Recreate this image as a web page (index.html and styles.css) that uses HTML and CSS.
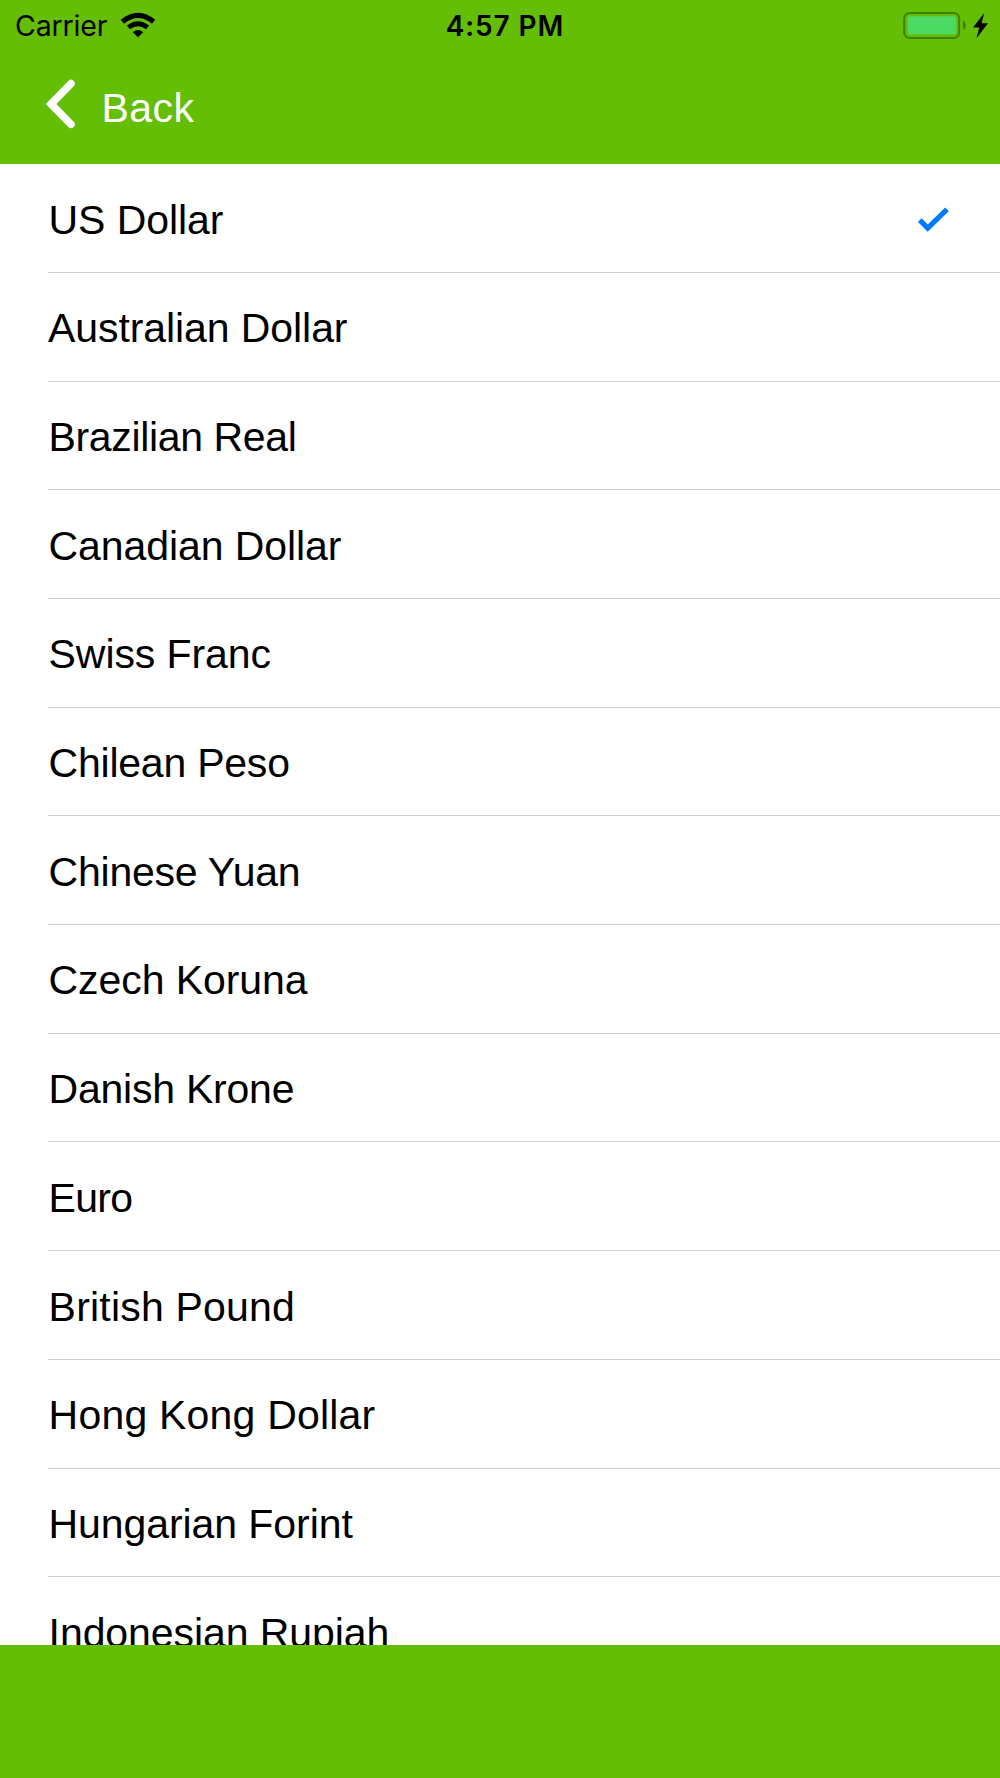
FILE: index.html
```html
<!DOCTYPE html>
<html lang="en">
<head>
<meta charset="utf-8">
<title>Currency</title>
<link rel="stylesheet" href="styles.css">
</head>
<body>
<div class="screen">
  <header class="header">
    <div class="status">
      <div class="status-left">
        <span class="carrier">Carrier</span>
        <svg class="wifi" width="36" height="26" viewBox="120 11 36 26" fill="none" stroke="#000">
          <path d="M122.4 20.8Q138 8 153.6 20.8" stroke-width="5"/>
          <path d="M128.4 26.4Q138 19 147.6 26.4" stroke-width="4.8"/>
          <path d="M132.8 31.2Q138 27 143.2 31.2L138 36.3Z" fill="#000" stroke="none"/>
        </svg>
      </div>
      <span class="time">4:57 PM</span>
      <svg class="battery" width="90" height="32" viewBox="900 8 90 32">
        <rect x="904.2" y="12" width="55" height="25" rx="5.5" fill="none" stroke="#418006" stroke-width="2"/>
        <rect x="907.7" y="15.3" width="48.5" height="18" rx="2.5" fill="#4cd964"/>
        <path d="M963 19.2Q966 21 966 24.2T963 29.2Z" fill="#418006"/>
        <path d="M984.2 12L973 26.5H979.3L976.5 37.2L988 22.2H981.5Z" fill="#000"/>
      </svg>
    </div>
    <nav class="nav">
      <svg class="chevron" width="32" height="52" viewBox="44 78 32 52" fill="none" stroke="#fff" stroke-width="7.6" stroke-linecap="round">
        <path d="M71 83.6L51 104L71 124.3" stroke-linejoin="miter"/>
      </svg>
      <span class="back">Back</span>
    </nav>
  </header>
  <main class="list">
    <div class="row"><span>US Dollar</span>
      <svg class="check" width="34" height="28" viewBox="916 206 34 28" fill="none" stroke="#007aff" stroke-width="5.2">
        <path d="M919.8 220.2L927.7 228L947 209.4"/>
      </svg>
    </div>
    <div class="row row-capital-a">Australian Dollar</div>
    <div class="row row-tighter">Brazilian Real</div>
    <div class="row">Canadian Dollar</div>
    <div class="row">Swiss Franc</div>
    <div class="row row-tight">Chilean Peso</div>
    <div class="row row-tight">Chinese Yuan</div>
    <div class="row">Czech Koruna</div>
    <div class="row row-tight">Danish Krone</div>
    <div class="row row-tightest">Euro</div>
    <div class="row row-loose">British Pound</div>
    <div class="row row-loose">Hong Kong Dollar</div>
    <div class="row">Hungarian Forint</div>
    <div class="row">Indonesian Rupiah</div>
  </main>
  <footer class="footer"></footer>
</div>
</body>
</html>
```
FILE: styles.css
```css
* { box-sizing: border-box; }
body { margin: 0; background: #fff; }
.screen {
  display: flex;
  flex-direction: column;
  width: 1000px;
  height: 1778px;
  overflow: hidden;
  font-family: "Liberation Sans", Arial, sans-serif;
  font-size: 41px;
  color: #000;
}
.header {
  flex: none;
  height: 164.3px;
  background: #64be05;
}
.status {
  display: grid;
  grid-template-columns: 1fr auto 1fr;
  align-items: center;
  height: 50px;
  padding: 0 10px 0 15px;
  font-family: Inter, sans-serif;
  font-size: 28.5px;
  line-height: 50px;
}
.status-left { display: flex; align-items: center; gap: 13px; }
.carrier { width: 92px; padding-top: 1px; letter-spacing: -0.15px; white-space: nowrap; }
.wifi { margin-top: -2px; }
.time {
  padding: 1px 0 0 5px;
  font-weight: 600;
  font-size: 28px;
  letter-spacing: 0.9px;
  white-space: nowrap;
}
.battery { justify-self: end; margin-top: -2px; }
.nav {
  display: flex;
  align-items: center;
  height: 108px;
  padding-left: 44px;
  color: #fff;
}
.back { margin-left: 25.6px; padding-top: 8px; letter-spacing: 0.4px; }
.list {
  flex: none;
  height: 1480.7px;
  overflow: hidden;
  background: #fff;
}
.row {
  display: flex;
  align-items: center;
  justify-content: space-between;
  height: 108.7px;
  margin-left: 48px;
  padding: 4px 50px 0 0.6px;
  border-bottom: 1px solid #d0d0d2;
  letter-spacing: -0.08px;
}
.row-capital-a { padding-left: 0; }
.row-tight { letter-spacing: -0.23px; }
.row-tighter { letter-spacing: -0.36px; }
.row-tightest { letter-spacing: -0.7px; }
.row-loose { letter-spacing: 0.2px; }
.footer { flex: 1; background: #64be05; }
```
